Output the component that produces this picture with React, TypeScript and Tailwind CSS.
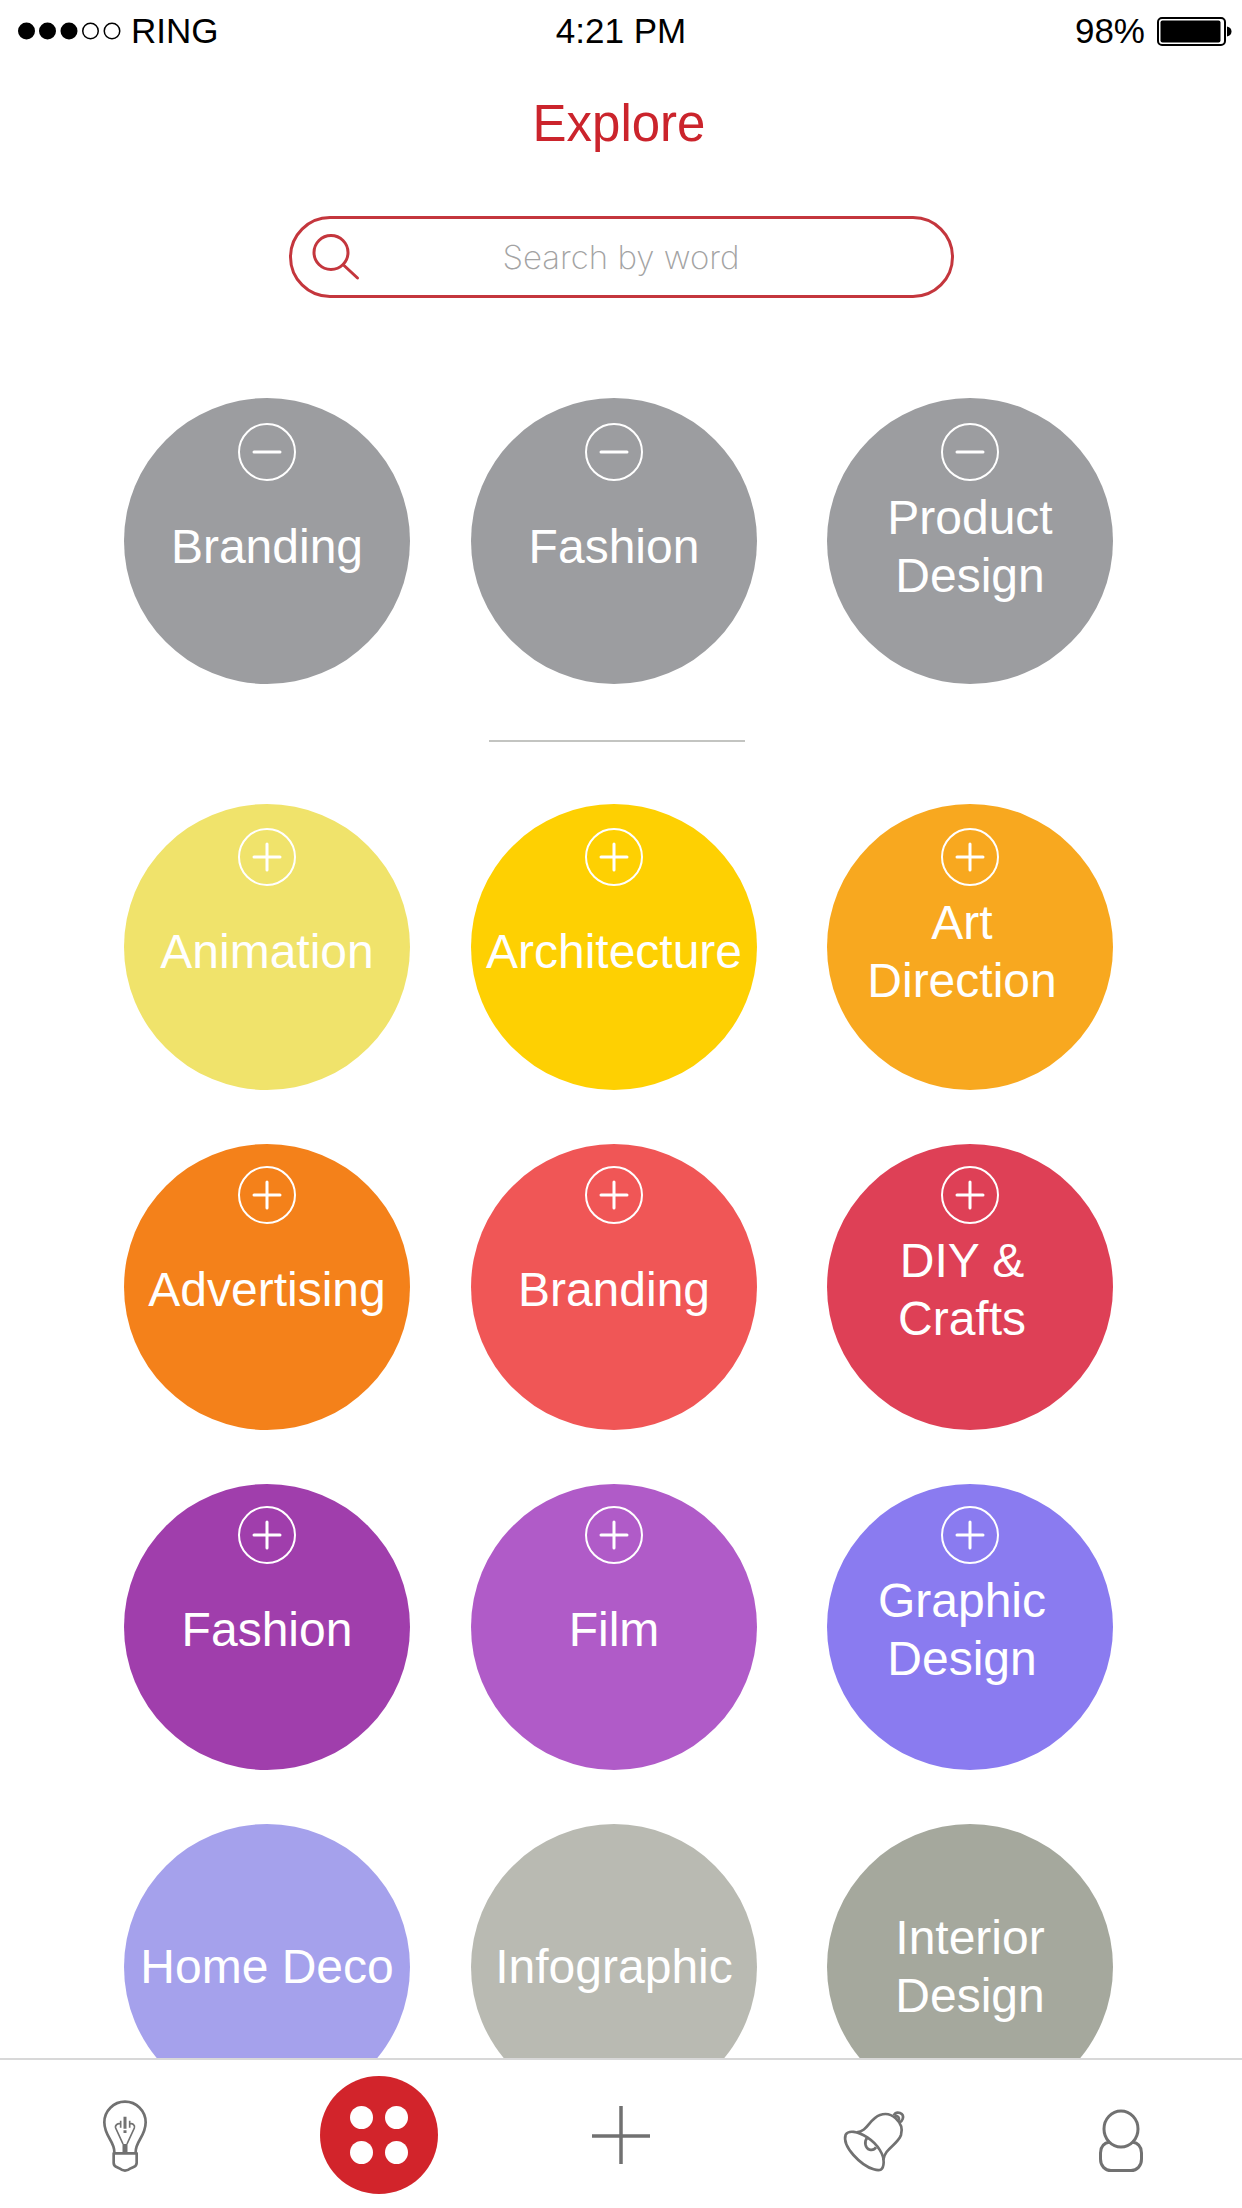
import React from "react";

type Category = { name: string; color: string };

const followed: Category[] = [
  { name: "Branding", color: "bg-[#9c9da0]" },
  { name: "Fashion", color: "bg-[#9c9da0]" },
  { name: "Product Design", color: "bg-[#9c9da0]" },
];

const featured: Category[] = [
  { name: "Animation", color: "bg-[#f0e36b]" },
  { name: "Architecture", color: "bg-[#fed002]" },
  { name: "Art Direction", color: "bg-[#f8a81f]" },
];

const suggested: Category[] = [
  { name: "Advertising", color: "bg-[#f4811a]" },
  { name: "Branding", color: "bg-[#f05656]" },
  { name: "DIY & Crafts", color: "bg-[#de4056]" },
  { name: "Fashion", color: "bg-[#a03eac]" },
  { name: "Film", color: "bg-[#b05bc8]" },
  { name: "Graphic Design", color: "bg-[#8a7bf0]" },
];

const more: Category[] = [
  { name: "Home Deco", color: "bg-[#a5a1ec]" },
  { name: "Infographic", color: "bg-[#b9bab2]" },
  { name: "Interior Design", color: "bg-[#a5a89d]" },
];

function ToggleIcon({ kind }: { kind: "plus" | "minus" }) {
  return (
    <svg className="h-[58px] w-[58px] shrink-0" viewBox="0 0 58 58" fill="none" stroke="currentColor" aria-hidden="true">
      <circle cx="29" cy="29" r="28" strokeWidth="2" />
      <path d="M16 29H42" strokeWidth="3" strokeLinecap="round" />
      {kind === "plus" && <path d="M29 16V42" strokeWidth="3" strokeLinecap="round" />}
    </svg>
  );
}

function Label({ name, inset = false }: { name: string; inset?: boolean }) {
  const stacked = /^(Product|Art|DIY &|Graphic|Interior) /.test(name);
  if (!stacked) return <span className="whitespace-nowrap">{name}</span>;
  return <span className={inset ? "max-w-[222px] pr-4" : "max-w-[210px]"}>{name}</span>;
}

function CategoryGrid({
  items,
  icon,
  pad = "",
}: {
  items: Category[];
  icon?: "plus" | "minus";
  pad?: string;
}) {
  return (
    <div className="grid grid-cols-[347fr_356fr_286fr] gap-y-[54px]">
      {items.map((c) => (
        <button
          key={c.name}
          type="button"
          className={`flex h-[286px] w-[286px] flex-col items-center rounded-full text-center text-[48px] leading-[58px] text-white ${c.color} ${icon ? pad : "justify-center"}`}
        >
          {icon ? (
            <>
              <ToggleIcon kind={icon} />
              <span className="mt-2 flex h-[116px] items-center">
                <Label name={c.name} inset={icon === "plus"} />
              </span>
            </>
          ) : (
            <Label name={c.name} />
          )}
        </button>
      ))}
    </div>
  );
}

function StatusBar() {
  return (
    <div className="grid h-[62px] shrink-0 grid-cols-3 items-center text-[35px] leading-[40px] text-black">
      <div className="flex items-center gap-2.5 pl-[18px]">
        <svg className="h-[18px] w-[103px]" viewBox="0 0 103 18" aria-hidden="true">
          <circle cx="8.5" cy="9" r="8.5" />
          <circle cx="29.5" cy="9" r="8.5" />
          <circle cx="51" cy="9" r="8.5" />
          <circle cx="72.5" cy="9" r="7.75" fill="none" stroke="black" strokeWidth="1.5" />
          <circle cx="94" cy="9" r="7.75" fill="none" stroke="black" strokeWidth="1.5" />
        </svg>
        <span>RING</span>
      </div>
      <div className="text-center">4:21 PM</div>
      <div className="flex items-center justify-end gap-3 pr-[10px]">
        <span>98%</span>
        <svg className="h-[29px] w-[75px]" viewBox="0 0 75 29" aria-hidden="true">
          <rect x="1" y="1" width="67" height="27" rx="4" fill="none" stroke="black" strokeWidth="2" />
          <rect x="3.5" y="3.5" width="60" height="22" rx="2" />
          <path d="M70 9.500Q74.500 10.500 74.500 14.500T70 19.500Z" />
        </svg>
      </div>
    </div>
  );
}

const navButton = "flex h-[118px] w-[118px] items-center justify-center";

export default function App() {
  return (
    <div className="flex h-screen flex-col bg-white font-['Liberation_Sans',Arial,sans-serif]">
      <StatusBar />
      <main className="flex min-h-0 flex-1 flex-col overflow-y-auto [scrollbar-width:none]">
        <h1 className="mt-8 pr-1 text-center text-[51px] leading-[60px] text-[#cb242c]">Explore</h1>

        <label className="mx-auto mt-[62px] flex h-[82px] w-[665px] max-w-full shrink-0 items-center rounded-full border-3 border-[#c4363d] pr-[70px] pl-5">
          <svg className="h-[50px] w-[50px] shrink-0" viewBox="0 0 50 50" fill="none" stroke="#c4363d" strokeWidth="3" aria-hidden="true">
            <circle cx="19" cy="20.500" r="17" />
            <path d="M31.500 33L45.500 46" strokeLinecap="round" />
          </svg>
          <input
            type="text"
            aria-label="Search by word"
            placeholder="Search by word"
            className="min-w-0 flex-1 bg-transparent text-center font-['Inter','Liberation_Sans',sans-serif] text-[33px] leading-[44px] font-extralight outline-none placeholder:text-[#a3a3a3]"
          />
        </label>

        <div className="flex flex-col pt-[100px] pr-[129px] pb-[54px] pl-[124px]">
          <CategoryGrid items={followed} icon="minus" pad="pt-[25px]" />
          <hr className="mt-14 mb-[62px] ml-[365px] w-[256px] border-t-2 border-[#c3c4c1]" />
          <div className="flex flex-col gap-[54px]">
            <CategoryGrid items={featured} icon="plus" pad="pt-6" />
            <CategoryGrid items={suggested} icon="plus" pad="pt-[22px]" />
            <CategoryGrid items={more} />
          </div>
        </div>
      </main>

      <nav className="grid h-[150px] shrink-0 grid-cols-[254fr_242fr_253fr_247fr_118px] items-center border-t-2 border-[#d8d8d8] pt-0.5 pr-[62px] pl-[66px] text-[#717171]">
        <button type="button" aria-label="Ideas" className={navButton}>
          <svg className="h-[88px] w-[70px]" viewBox="0 0 210 264" fill="none" stroke="currentColor" strokeWidth="8" aria-hidden="true">
            <path d="M73 184C74 150 43 137 43 94A62 62 0 0 1 167 94C167 137 136 150 137 184" />
            <path d="M71 187H140V216C140 228 130 228 122 232Q105 246 88 232C80 228 71 228 71 216Z" strokeLinejoin="round" />
            <path d="M92 89V110M92 99C84 96 74 102 77 111L99 159M119 89V110M119 99C127 96 136 102 133 111L111 159" strokeWidth="5" />
            <path d="M105 77V113M105 118V126" strokeWidth="9" />
            <path d="M105 159V187" strokeWidth="15" />
          </svg>
        </button>
        <button type="button" aria-label="Explore" aria-current="page" className="flex h-[118px] w-[118px] items-center justify-center rounded-full bg-[#d2242b]">
          <span className="grid grid-cols-2 gap-3">
            <span className="h-[23px] w-[23px] rounded-full bg-white" />
            <span className="h-[23px] w-[23px] rounded-full bg-white" />
            <span className="h-[23px] w-[23px] rounded-full bg-white" />
            <span className="h-[23px] w-[23px] rounded-full bg-white" />
          </span>
        </button>
        <button type="button" aria-label="Add" className={navButton}>
          <svg className="h-[58px] w-[58px]" viewBox="0 0 58 58" fill="none" stroke="currentColor" strokeWidth="3.500" aria-hidden="true">
            <path d="M29 0V58M0 30H58" />
          </svg>
        </button>
        <button type="button" aria-label="Notifications" className={navButton}>
          <svg className="h-[80px] w-[88px]" viewBox="0 -15 264 240" fill="none" stroke="currentColor" strokeWidth="8" strokeLinejoin="round" aria-hidden="true">
            <path d="M80 97C113 95 118 56 150 45C167 39 184 43 197 55C211 68 219 86 213 105C203 134 163 146 160 180" />
            <path d="M47 104C55 90 82 93 112 112C145 134 162 165 161 187C160 211 150 214 131 208C93 196 35 140 47 104Z" />
            <path d="M191 46C200 31 224 39 218 57C216 64 214 66 208 68M194 48C203 46 209 53 207 62" />
            <path d="M112 113C101 125 106 145 119 149C127 151 134 148 138 142" />
          </svg>
        </button>
        <button type="button" aria-label="Profile" className={navButton}>
          <svg className="h-[76px] w-[46px]" viewBox="0 0 46 76" fill="none" stroke="currentColor" strokeWidth="3" aria-hidden="true">
            <ellipse cx="23" cy="32" rx="17" ry="18" />
            <path d="M12 45C5 46 2.500 50 2.500 56V62C2.500 69 7 73.500 13 73.500H33C39 73.500 43.500 69 43.500 62V56C43.500 50 41 46 34 45" />
          </svg>
        </button>
      </nav>
    </div>
  );
}
